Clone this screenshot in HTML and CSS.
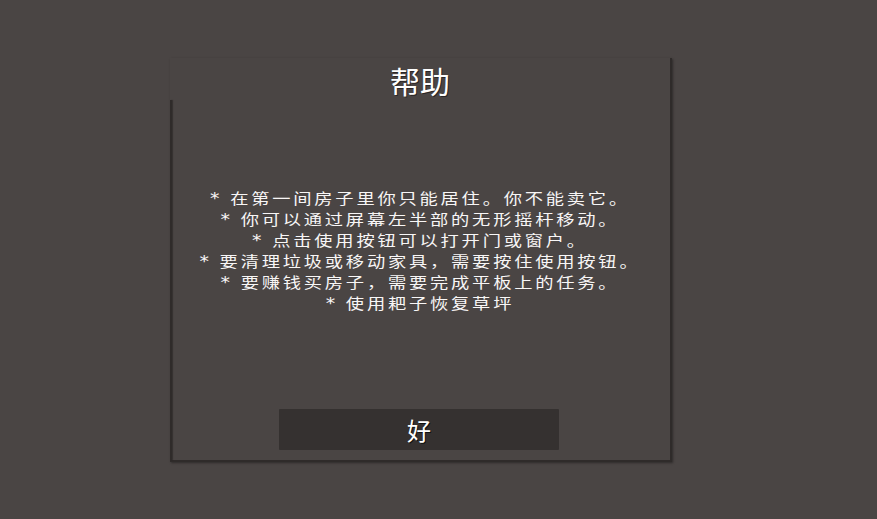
FILE: index.html
```html
<!DOCTYPE html>
<html lang="zh">
<head>
<meta charset="utf-8">
<link rel="stylesheet" href="styles.css">
</head>
<body>
<div class="screen">
  <div class="panel">
    <h1 class="title">帮助</h1>
    <div class="help">
      <p><span class="star">*</span> 在第一间房子里你只能居住。你不能卖它。</p>
      <p><span class="star">*</span> 你可以通过屏幕左半部的无形摇杆移动。</p>
      <p><span class="star">*</span> 点击使用按钮可以打开门或窗户。</p>
      <p><span class="star">*</span> 要清理垃圾或移动家具，需要按住使用按钮。</p>
      <p><span class="star">*</span> 要赚钱买房子，需要完成平板上的任务。</p>
      <p><span class="star">*</span> 使用耙子恢复草坪</p>
    </div>
    <button class="ok">好</button>
  </div>
</div>
</body>
</html>
```
FILE: styles.css
```css
html, body {
  margin: 0;
  padding: 0;
  background: #4a4544;
  width: 877px;
  height: 519px;
  overflow: hidden;
}
.screen {
  padding: 58px 0 0 170px;
}
.panel {
  position: relative;
  width: 500px;
  height: 402px;
  border-right: 2px solid #2f2b2a;
  border-bottom: 2px solid #2f2b2a;
  box-shadow: 1px 1px 2px rgba(20, 18, 18, 0.5);
  display: flex;
  flex-direction: column;
  align-items: center;
  font-family: "Noto Sans CJK SC", "Noto Sans", sans-serif;
  color: #f4f2f2;
}
.panel::before {
  content: "";
  position: absolute;
  left: 0;
  top: 42px;
  bottom: 0;
  width: 2px;
  background: #2f2b2a;
  box-shadow: 1px 0 1px rgba(20, 18, 18, 0.4);
}
.title {
  margin: 4px 0 0 0;
  font-size: 30px;
  line-height: 36px;
  font-weight: normal;
  color: #ffffff;
  text-shadow: 1px 1px 0 #2a2626;
}
.help {
  margin-top: 89px;
  width: 500px;
  text-align: center;
  font-size: 14.5px;
  line-height: 21px;
  letter-spacing: 2.2px;
  color: #f8f6f6;
}
.help p {
  margin: 0;
  height: 21px;
  white-space: nowrap;
  transform: scaleX(1.26);
}
.star {
  font-family: "DejaVu Sans", sans-serif;
  font-size: 15px;
  line-height: 0;
  letter-spacing: 3px;
}
.ok {
  margin-top: 96px;
  margin-left: -2px;
  width: 280px;
  height: 41px;
  border: none;
  border-radius: 1px;
  background: #353130;
  color: #ffffff;
  font-family: "Noto Sans CJK SC", "Noto Sans", sans-serif;
  font-size: 24px;
  line-height: 41px;
  padding: 0;
  text-shadow: 1px 1px 0 #111;
}
```
